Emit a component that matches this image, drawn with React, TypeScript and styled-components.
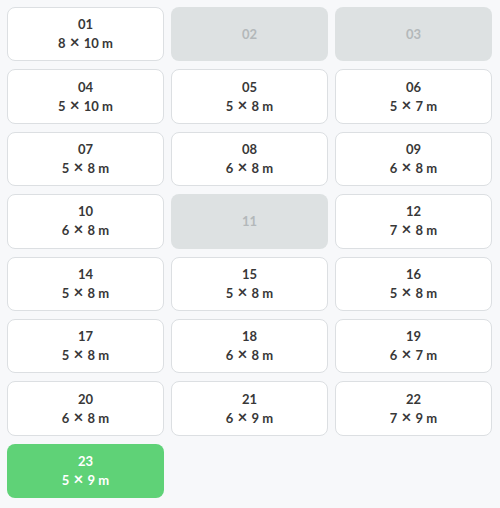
import React from 'react';
import styled, { createGlobalStyle } from 'styled-components';

const GlobalStyle = createGlobalStyle`
  html, body {
    margin: 0;
    padding: 0;
    background: #f7f8fa;
  }
  body {
    font-family: Lato, "Open Sans", sans-serif;
  }
`;

type Plot = {
  id: string;
  w?: number;
  l?: number;
  status: 'free' | 'taken' | 'selected';
};

const plots: Plot[] = [
  { id: '01', w: 8, l: 10, status: 'free' },
  { id: '02', status: 'taken' },
  { id: '03', status: 'taken' },
  { id: '04', w: 5, l: 10, status: 'free' },
  { id: '05', w: 5, l: 8, status: 'free' },
  { id: '06', w: 5, l: 7, status: 'free' },
  { id: '07', w: 5, l: 8, status: 'free' },
  { id: '08', w: 6, l: 8, status: 'free' },
  { id: '09', w: 6, l: 8, status: 'free' },
  { id: '10', w: 6, l: 8, status: 'free' },
  { id: '11', status: 'taken' },
  { id: '12', w: 7, l: 8, status: 'free' },
  { id: '14', w: 5, l: 8, status: 'free' },
  { id: '15', w: 5, l: 8, status: 'free' },
  { id: '16', w: 5, l: 8, status: 'free' },
  { id: '17', w: 5, l: 8, status: 'free' },
  { id: '18', w: 6, l: 8, status: 'free' },
  { id: '19', w: 6, l: 7, status: 'free' },
  { id: '20', w: 6, l: 8, status: 'free' },
  { id: '21', w: 6, l: 9, status: 'free' },
  { id: '22', w: 7, l: 9, status: 'free' },
  { id: '23', w: 5, l: 9, status: 'selected' },
];

const Grid = styled.div`
  display: grid;
  grid-template-columns: repeat(3, 157px);
  grid-auto-rows: 54.4px;
  column-gap: 7px;
  row-gap: 8px;
  padding: 7px 8px 7px 7px;
`;

const Cell = styled.button<{ $status: Plot['status'] }>`
  box-sizing: border-box;
  display: flex;
  flex-direction: column;
  align-items: center;
  justify-content: center;
  gap: 2px;
  margin: 0;
  padding: 0;
  border-radius: 8px;
  font-family: Lato, "Open Sans", sans-serif;
  cursor: ${p => (p.$status === 'taken' ? 'default' : 'pointer')};
  border: 1px solid
    ${p => (p.$status === 'free' ? '#dcdfe2' : 'transparent')};
  background: ${p =>
    p.$status === 'free' ? '#ffffff' : p.$status === 'taken' ? '#dde1e2' : '#5fd277'};
  color: ${p =>
    p.$status === 'free' ? '#383838' : p.$status === 'taken' ? '#b3b8ba' : '#ffffff'};
`;

const Number = styled.span`
  font-size: 13px;
  font-weight: 700;
  line-height: 17px;
`;

const Size = styled.span`
  font-size: 13px;
  font-weight: 700;
  line-height: 17px;
  white-space: pre;
`;

const Times = styled.span`
  font-size: 17px;
  font-weight: 700;
  line-height: 13px;
  margin: 0 1px;
`;

export default function App() {
  return (
    <>
      <GlobalStyle />
      <Grid>
        {plots.map(plot => (
          <Cell key={plot.id} $status={plot.status} disabled={plot.status === 'taken'}>
            <Number>{plot.id}</Number>
            {plot.w && (
              <Size>
                {plot.w} <Times>×</Times> {plot.l}{'\u202F'}m
              </Size>
            )}
          </Cell>
        ))}
      </Grid>
    </>
  );
}
